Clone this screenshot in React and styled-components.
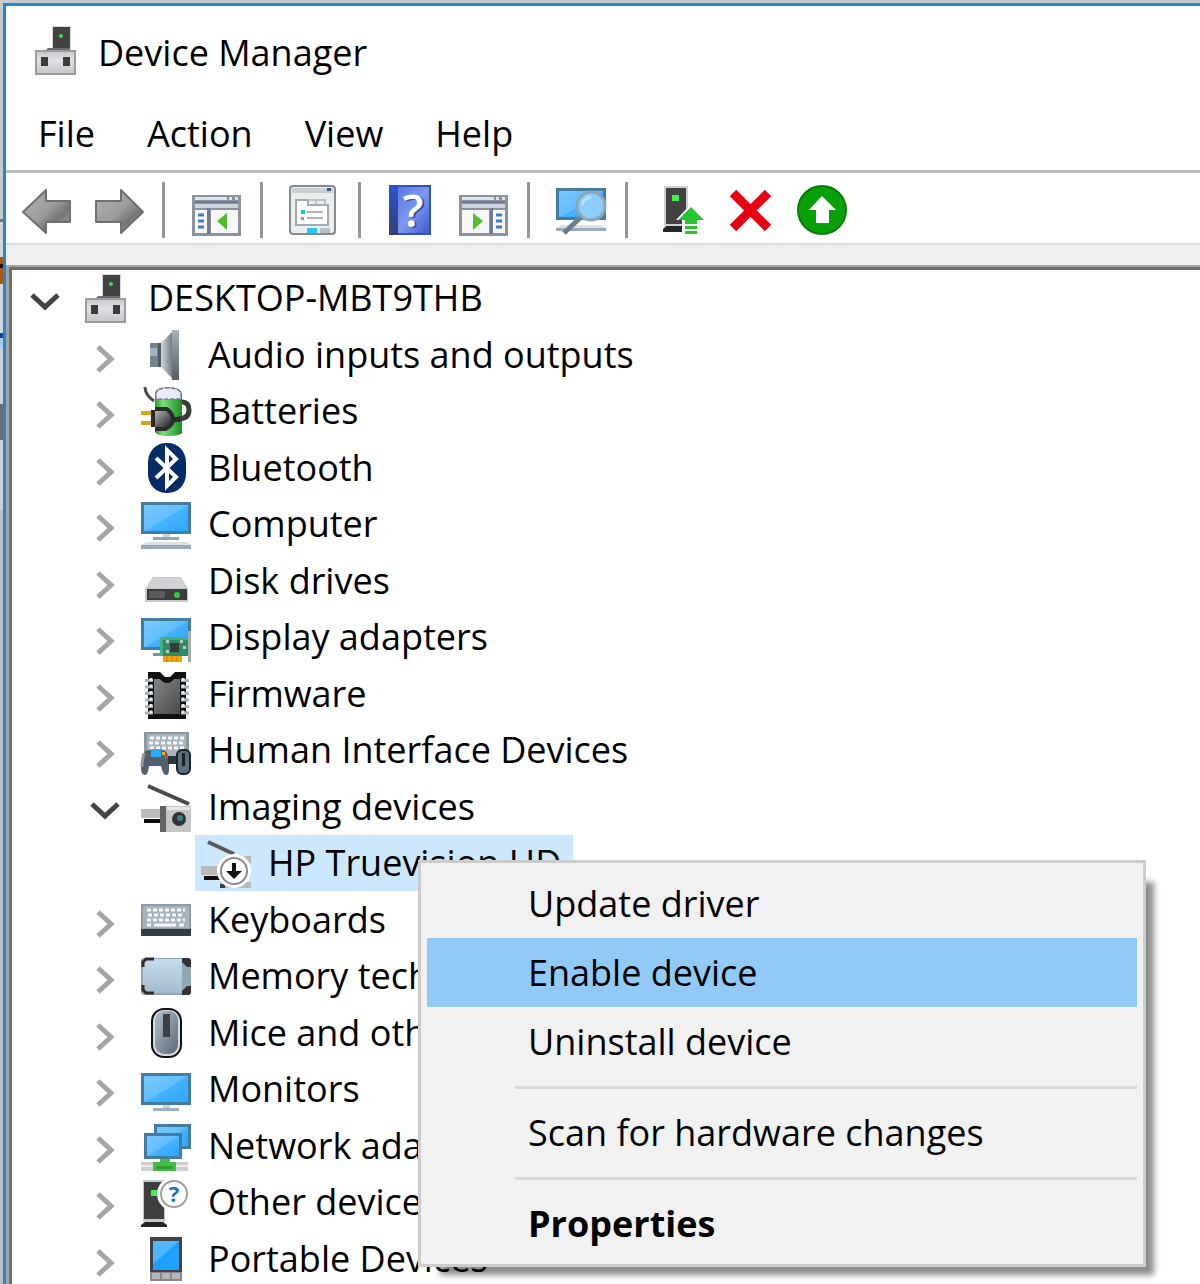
import React, { useState } from "react";
import styled, { createGlobalStyle, css } from "styled-components";

const GlobalStyle = createGlobalStyle`
  * {
    box-sizing: border-box;
  }

  body {
    margin: 0;
    color: #000;
    font-family: "Open Sans", "Noto Sans", sans-serif;
    font-size: 36px;
    line-height: 50px;
  }

  button {
    border: 0;
    padding: 0;
    margin: 0;
    background: none;
    color: inherit;
    font: inherit;
    white-space: nowrap;
  }
`;

const Svg = ({ children }) => (
  <Glyph viewBox="0 0 50 50" aria-hidden="true">
    {children}
  </Glyph>
);

const Gradients = () => (
  <Defs aria-hidden="true">
    <defs>
      <linearGradient id="screen" x1="0" y1="0" x2="1" y2="1">
        <stop offset="0" stopColor="#7cc9ff" />
        <stop offset="0.5" stopColor="#62beff" />
        <stop offset="0.52" stopColor="#45b2ff" />
        <stop offset="1" stopColor="#2ba6ff" />
      </linearGradient>
      <linearGradient id="steel" x1="0" y1="0" x2="1" y2="0">
        <stop offset="0" stopColor="#d4d7d9" />
        <stop offset="1" stopColor="#6b7680" />
      </linearGradient>
      <linearGradient id="plate" x1="0" y1="0" x2="0" y2="1">
        <stop offset="0" stopColor="#a8b1b9" />
        <stop offset="1" stopColor="#525d68" />
      </linearGradient>
      <linearGradient id="box" x1="0" y1="0" x2="0" y2="1">
        <stop offset="0" stopColor="#c6c6ca" />
        <stop offset="0.4" stopColor="#e2e2e5" />
        <stop offset="1" stopColor="#c4c4ca" />
      </linearGradient>
      <linearGradient id="arrow" x1="0" y1="0" x2="1" y2="1">
        <stop offset="0" stopColor="#b5b5b5" />
        <stop offset="0.5" stopColor="#9b9b9b" />
        <stop offset="0.7" stopColor="#767676" />
        <stop offset="1" stopColor="#a5a5a5" />
      </linearGradient>
      <linearGradient id="green" x1="0" y1="0" x2="1" y2="0">
        <stop offset="0" stopColor="#2c9a33" />
        <stop offset="0.3" stopColor="#7fdb7c" />
        <stop offset="1" stopColor="#199022" />
      </linearGradient>
      <linearGradient id="plug" x1="0" y1="0" x2="1" y2="1">
        <stop offset="0" stopColor="#b5b5b5" />
        <stop offset="1" stopColor="#222" />
      </linearGradient>
      <linearGradient id="chip" x1="0" y1="0" x2="1" y2="1">
        <stop offset="0" stopColor="#848484" />
        <stop offset="1" stopColor="#4a4a4a" />
      </linearGradient>
      <linearGradient id="memory" x1="0" y1="0" x2="0" y2="1">
        <stop offset="0" stopColor="#c4dcec" />
        <stop offset="1" stopColor="#a4bccb" />
      </linearGradient>
      <linearGradient id="mouse" x1="0" y1="0" x2="1" y2="1">
        <stop offset="0" stopColor="#b4bfca" />
        <stop offset="1" stopColor="#5b6876" />
      </linearGradient>
      <linearGradient id="book" x1="0" y1="0" x2="1" y2="1">
        <stop offset="0" stopColor="#5878e6" />
        <stop offset="0.5" stopColor="#7f98ee" />
        <stop offset="1" stopColor="#3a5fd2" />
      </linearGradient>
      <linearGradient id="spine" x1="0" y1="0" x2="0" y2="1">
        <stop offset="0" stopColor="#2a55d0" />
        <stop offset="1" stopColor="#364079" />
      </linearGradient>
    </defs>
  </Defs>
);

const Screen = ({ x, y, w, h }) => (
  <rect x={x + 1.5} y={y + 1.5} width={w - 3} height={h - 3} fill="url(#screen)" stroke="#437c9f" strokeWidth="3" />
);

const HostIcon = () => (
  <Svg>
    <path d="M21 1h19v24H21z" fill="#d3d9dc" />
    <path d="M22 2h17v24H22z" fill="#424242" />
    <path d="M17 23h22v3H14z" fill="#6c6c6c" />
    <circle cx="30" cy="11" r="2" fill="#3fdc4c" />
    <rect x="5" y="26" width="39" height="23" fill="url(#box)" stroke="#9c9c9e" strokeWidth="2" />
    <path d="M10 32h7v9h-7zM32 32h7v9h-7z" fill="#3c3c3e" />
  </Svg>
);

const SpeakerIcon = () => (
  <Svg>
    <path d="M9 13h10v24H9z" fill="#748291" />
    <path d="M9 18h7v8H9z" fill="#a6b3bf" />
    <path d="M17 13h3v24h-3z" fill="#4d5965" />
    <path d="M20 13 32 1v48L20 37z" fill="url(#steel)" />
    <path d="M31 0h7v50h-7z" fill="url(#plate)" />
  </Svg>
);

const BatteryIcon = () => (
  <Svg>
    <path d="M14 8Q14 1 27 1t14 7v34q0 8-14 8t-13-8z" fill="url(#green)" />
    <path d="M15 8Q15 2 27 2t13 6v5H15z" fill="#eceafa" stroke="#7e7b98" strokeWidth="1.5" strokeDasharray="4 2" />
    <path d="M14 42q0 8 13 8t14-8v5q-4 3-14 3t-13-4z" fill="#167320" />
    <path d="M4 1q0 8 9 14" fill="none" stroke="#4b4b4b" strokeWidth="3" />
    <path d="M36 33q12 0 12-9 0-8-7-8" fill="none" stroke="#3c3c3c" strokeWidth="5" />
    <path d="M0 25h10v4H0zM0 35h10v4H0z" fill="#d5a80d" />
    <path d="M10 24h4v-3h12q5 2 8 10h5v5h-5q-3 6-9 9H14v-4h-4z" fill="#2b2b2b" />
    <path d="M14 25h11q5 4 5 8t-5 8H14z" fill="url(#plug)" />
  </Svg>
);

const BluetoothIcon = () => (
  <Svg>
    <rect x="7" y="0" width="38" height="50" rx="18" ry="19" fill="#052c66" />
    <path d="M15 15 35 34 26 43V7l9 9L15 35" fill="none" stroke="#fff" strokeWidth="4" />
  </Svg>
);

const ComputerIcon = () => (
  <Svg>
    <Screen x={0} y={3} w={50} h={32} />
    <path d="M22 35h7v3h-7z" fill="#c7d5df" />
    <path d="M12 38h26v3H12z" fill="#8fa5b8" />
    <path d="M5 43h40l5 3H0z" fill="#dbe1e6" />
    <path d="M0 46h50v4H0z" fill="#9aabba" />
  </Svg>
);

const DiskIcon = () => (
  <Svg>
    <path d="M12 21h28l7 12v13H4V33z" fill="#c5cacf" />
    <path d="M12 22h28l5 10H6z" fill="#d1d2d5" />
    <path d="M6 33h40v11H6z" fill="#3d3d3e" />
    <path d="M8 35h16v7H8z" fill="#5b5b5b" />
    <circle cx="36" cy="39" r="3" fill="#35c93b" />
  </Svg>
);

const DisplayIcon = () => (
  <Svg>
    <Screen x={0} y={6} w={50} h={32} />
    <path d="M12 41h10v3H12z" fill="#7990a5" />
    <path d="M47 19h3v31h-3z" fill="#a8acad" />
    <path d="M19 25h28v19H19z" fill="#2e8b63" />
    <path d="M19 25h28v3H22v16h-3z" fill="#48ae7d" />
    <path d="M29 31h9v9h-9z" fill="#373b39" />
    <path d="M25 28h3v3h-3zM39 28h3v3h-3zM25 38h3v3h-3zM42 34h3v3h-3z" fill="#b9cdbf" />
    <path d="M22 44h19v6H22z" fill="#f2a30b" />
    <path d="M26 44v6M31 44v6M36 44v6" stroke="#d98200" />
  </Svg>
);

const FirmwareIcon = () => (
  <Svg>
    <path d="M7 3h12l5 5h5l5-5h11v47H7z" fill="#101010" />
    <path d="M13 10h6q3 4 7 4t7-4h6v35H13z" fill="url(#chip)" />
    <path d="M8 10v36M44 10v36" stroke="#a6b1ba" strokeWidth="8" strokeDasharray="3 3.5" />
    <path d="M10 9v36M42 9v36" stroke="#e3e8ec" strokeWidth="3" strokeDasharray="3 3.5" />
  </Svg>
);

const HidIcon = () => (
  <Svg>
    <path d="M3 7h45v28H3z" fill="#8c98a3" />
    <path d="M6 9h39v22H6z" fill="#aab4bc" />
    <path d="M9 13h34M8 18h36M9 23h34" stroke="#f5f6f7" strokeWidth="3" strokeDasharray="4 2" />
    <path d="M7 25h15q6 1 6 14v6q0 5-3 5t-5-9H8q-1 9-4 9-4 0-4-7 0-17 7-18z" fill="#53606b" />
    <path d="M3 28q-2 8-2 14" fill="none" stroke="#8d9aa4" strokeWidth="3" />
    <path d="M10 24h10v8H10z" fill="#2eaaff" />
    <path d="M21 27h3v3h-3z" fill="#f3b51b" />
    <path d="M24 30h3v3h-3z" fill="#e24a3b" />
    <path d="M27 31h8v8h-8z" fill="#2d363e" />
    <rect x="36" y="25" width="13" height="24" rx="5" fill="#5e6d7e" stroke="#1c232a" strokeWidth="2" />
    <path d="M41 28h3v13h-3z" fill="#1b222a" />
  </Svg>
);

const CameraIcon = () => (
  <Svg>
    <path d="m7 4 41 18" stroke="#4a4a4a" strokeWidth="4" />
    <path d="M0 27h19v9H0z" fill="#bdbdbd" />
    <path d="M3 37h16v4H3z" fill="#0e0e0e" />
    <path d="M19 24h31v26H19z" fill="#c5c5c5" />
    <path d="M19 24h6v26h-6z" fill="#636363" />
    <path d="M26 25h23v3H26z" fill="#e7e7e7" />
    <circle cx="38" cy="37" r="7" fill="#303438" />
    <circle cx="39" cy="36" r="3" fill="#407f86" />
  </Svg>
);

const DisabledCameraIcon = () => (
  <Svg>
    <path d="m7 4 26 12" stroke="#5a5a5a" strokeWidth="4" />
    <path d="M0 28h17v9H0z" fill="#b9b9b9" />
    <path d="M3 38h16v4H3z" fill="#0e0e0e" />
    <path d="M19 44h31v6H19zM42 18h8v8z" fill="#b4b9bd" />
    <path d="M19 46h5v4h-5z" fill="#3b3b3b" />
    <circle cx="33" cy="33" r="17" fill="#fff" />
    <circle cx="33" cy="33" r="13" fill="#fff" stroke="#8b8b8b" strokeWidth="2" />
    <path d="M31 25h4v8h6l-8 8-8-8h6z" fill="#111" />
  </Svg>
);

const KeyboardIcon = () => (
  <Svg>
    <path d="M0 9h50v32H0z" fill="#8e9aa5" />
    <path d="M2 11h46v22H2z" fill="#aab4bd" />
    <path d="M6 15h38M7 20h36M6 25h38" stroke="#f5f6f7" strokeWidth="3" strokeDasharray="4 2" />
    <path d="M6 30h4M13 30h22M38 30h5" stroke="#f5f6f7" strokeWidth="3" />
    <path d="M0 34h50v7H0z" fill="#343c41" />
  </Svg>
);

const MemoryIcon = () => (
  <Svg>
    <rect x="0" y="7" width="50" height="37" rx="3" fill="#8ea6b6" />
    <path d="M2 8h39v34H2z" fill="url(#memory)" />
    <path d="M2 16v-5l3-3h8M2 34v5l3 3h8" fill="none" stroke="#2d2d2d" strokeWidth="3" />
    <path d="M41 7h7l2 2v7h-4l-5-5zM41 44h7l2-2v-7h-4l-5 5z" fill="#333" />
  </Svg>
);

const MouseIcon = () => (
  <Svg>
    <rect x="11" y="1" width="29" height="48" rx="12" fill="#d5dbe0" stroke="#111" strokeWidth="2" />
    <rect x="14" y="3" width="23" height="43" rx="9" fill="url(#mouse)" />
    <path d="M22 6h7v23h-7z" fill="#3c3f43" />
  </Svg>
);

const MonitorIcon = () => (
  <Svg>
    <Screen x={0} y={9} w={50} h={32} />
    <path d="M22 41h7v3h-7z" fill="#c7d5df" />
    <path d="M12 44h26v3H12z" fill="#9fb0c0" />
  </Svg>
);

const NetworkIcon = () => (
  <Svg>
    <Screen x={13} y={3} w={37} h={25} />
    <Screen x={3} y={12} w={38} h={26} />
    <path d="M0 41h47v9H0z" fill="#cfcfcf" />
    <path d="M0 44h47v2H0z" fill="#ececec" />
    <path d="M19 38h10v3h6v9H12v-9h7z" fill="#45bb49" />
    <path d="M15 45h17v3H15z" fill="#329e38" />
  </Svg>
);

const UnknownIcon = () => (
  <Svg>
    <path d="M2 3h22v42H2z" fill="#c3cacf" />
    <path d="M3 5h20v37H3z" fill="#3f3f3f" />
    <path d="M4 45h18l4 3v2H0v-2z" fill="#242424" />
    <path d="M10 13h7v6h-7z" fill="#3df04c" />
    <circle cx="33" cy="17" r="17" fill="#fff" />
    <circle cx="33" cy="17" r="13" fill="#fff" stroke="#a0a0a0" strokeWidth="2" />
    <text x="33" y="25" textAnchor="middle" fontSize="22" fontWeight="700" fill="#1b74bb">
      ?
    </text>
  </Svg>
);

const PortableIcon = () => (
  <Svg>
    <path d="M9 3h32v44H9z" fill="#434343" />
    <path d="M12 7h26v29H12z" fill="#1ea0ff" />
    <path d="M12 7h26L12 30z" fill="#4fb6ff" />
    <path d="M9 38h32v9H9z" fill="#85898c" />
    <path d="M11 39h8v6h-8zM21 39h8v6h-8zM31 39h8v6h-8z" fill="#b5b8ba" />
  </Svg>
);

const BackIcon = () => (
  <Svg>
    <path d="M1 27 24 5v11h24v21H24v11z" fill="url(#arrow)" stroke="#707070" strokeWidth="2" strokeLinejoin="round" />
  </Svg>
);

const ForwardIcon = () => (
  <Svg>
    <path d="M50 27 28 5v11H3v21h25v11z" fill="url(#arrow)" stroke="#707070" strokeWidth="2" strokeLinejoin="round" />
  </Svg>
);

const PaneIcon = ({ flip }) => (
  <Svg>
    <path d="M1 10h49v41H1z" fill="#8d939c" />
    <path d="M4 12h32v3H4zM38 12h3v3h-3zM44 12h3v3h-3z" fill="#dfe3e8" />
    <path d="M4 16h43v2H4z" fill="#6d7a99" />
    <path d="M4 19h43v4H4z" fill="#cfd4da" />
    <g transform={flip ? "matrix(-1 0 0 1 51 0)" : undefined}>
      <path d="M4 25h12v23H4zM20 25h27v23H20z" fill="#f7f7f7" />
      <path d="M16 23h3v26h-3z" fill="#6d7a99" />
      <path d="M7 30h6M7 36h6M7 42h6" stroke="#3f7dc2" strokeWidth="3" />
      <path d="M26 36 36 28v17z" fill="#53bd30" />
    </g>
  </Svg>
);

const PropertiesIcon = () => (
  <Svg>
    <rect x="1" y="1" width="45" height="48" rx="3" fill="#eceeee" stroke="#858a8d" strokeWidth="2" />
    <path d="M3 3h41v5H3z" fill="#c9ced2" />
    <path d="M38 3h4v3h-4z" fill="#3a5678" />
    <path d="M7 15h12v5h20v20H7z" fill="#fff" stroke="#a3a9b5" strokeWidth="2" />
    <path d="M19 15h8v5M27 15h9v5" fill="none" stroke="#b9bec8" strokeWidth="2" />
    <path d="M18 27h16M18 33h16" stroke="#b2b2b2" strokeWidth="2" />
    <path d="M12 25h4v4h-4z" fill="#19c4f2" />
    <path d="M12 32h3v3h-3z" fill="#999" />
    <path d="M18 43h10v5H18z" fill="#24c8f5" />
    <path d="M31 43h10v5H31z" fill="#bdbdbd" />
  </Svg>
);

const HelpIcon = () => (
  <Svg>
    <path d="M2 0h42v50H2z" fill="#3553b5" />
    <path d="M2 0h9v50H2z" fill="url(#spine)" />
    <path d="M11 2h31v46H11z" fill="url(#book)" />
    <text x="28" y="43" textAnchor="middle" fontSize="46" fontWeight="600" fill="#3a4c94">
      ?
    </text>
    <text x="26" y="42" textAnchor="middle" fontSize="46" fontWeight="600" fill="#fff">
      ?
    </text>
  </Svg>
);

const ScanIcon = () => (
  <Svg>
    <Screen x={0} y={3} w={50} h={32} />
    <path d="M5 40h40l5 3H0z" fill="#dbe1e6" />
    <path d="M0 43h50v3H0z" fill="#9aabba" />
    <path d="M24 33 8 48" stroke="#6d7f8d" strokeWidth="5" />
    <circle cx="35" cy="21" r="14" fill="#8bcdfb" stroke="#8fa5b4" strokeWidth="3" />
    <path d="M26 20q2-7 9-8" fill="none" stroke="#b5e0ff" strokeWidth="3" />
  </Svg>
);

const UpdateIcon = () => (
  <Svg>
    <path d="M10 1h24v40H10z" fill="#ccd1d6" />
    <path d="M12 3h20v36H12z" fill="#424242" />
    <path d="M12 41h17v3h2v3H9v-3z" fill="#272727" />
    <path d="M18 10h7v6h-7z" fill="#39f445" />
    <path d="M36 20 22 35h6v15h17V35h6z" fill="#fff" />
    <path d="M37 22 24 35h7v4h12v-4h7zM31 41h12v3H31zM31 46h12v3H31z" fill="#25c52f" />
  </Svg>
);

const DeleteIcon = () => (
  <Svg>
    <path d="m8 8 35 35M43 8 8 43" stroke="#e60012" strokeWidth="9" />
  </Svg>
);

const EnableIcon = () => (
  <Svg>
    <circle cx="26" cy="25" r="24" fill="#08a008" stroke="#0b7a0b" strokeWidth="2" />
    <path d="M26 11 40 25h-7v13H20V25h-7z" fill="#fff" />
  </Svg>
);

const Chevron = ({ open }) => (
  <Svg>
    {open ? (
      <path d="m12 22 13 12 13-12" fill="none" stroke="#444" strokeWidth="5" />
    ) : (
      <path d="m18 17 13 12-13 12" fill="none" stroke="#a6a6a6" strokeWidth="5" />
    )}
  </Svg>
);

const menus = ["File", "Action", "View", "Help"];

const tools = [
  [
    ["Back", BackIcon],
    ["Forward", ForwardIcon],
  ],
  [["Show/Hide Console Tree", PaneIcon]],
  [["Properties", PropertiesIcon]],
  [
    ["Help", HelpIcon],
    ["Show/Hide Action Pane", () => <PaneIcon flip />],
  ],
  [["Scan for hardware changes", ScanIcon]],
  [
    ["Update driver", UpdateIcon],
    ["Uninstall device", DeleteIcon],
    ["Enable device", EnableIcon],
  ],
];

const devices = [
  { name: "DESKTOP-MBT9THB", icon: HostIcon, level: 0, open: true },
  { name: "Audio inputs and outputs", icon: SpeakerIcon, level: 1 },
  { name: "Batteries", icon: BatteryIcon, level: 1 },
  { name: "Bluetooth", icon: BluetoothIcon, level: 1 },
  { name: "Computer", icon: ComputerIcon, level: 1 },
  { name: "Disk drives", icon: DiskIcon, level: 1 },
  { name: "Display adapters", icon: DisplayIcon, level: 1 },
  { name: "Firmware", icon: FirmwareIcon, level: 1 },
  { name: "Human Interface Devices", icon: HidIcon, level: 1 },
  { name: "Imaging devices", icon: CameraIcon, level: 1, open: true },
  { name: "HP Truevision HD", icon: DisabledCameraIcon, level: 2, leaf: true },
  { name: "Keyboards", icon: KeyboardIcon, level: 1 },
  { name: "Memory technology devices", icon: MemoryIcon, level: 1 },
  { name: "Mice and other pointing devices", icon: MouseIcon, level: 1 },
  { name: "Monitors", icon: MonitorIcon, level: 1 },
  { name: "Network adapters", icon: NetworkIcon, level: 1 },
  { name: "Other devices", icon: UnknownIcon, level: 1 },
  { name: "Portable Devices", icon: PortableIcon, level: 1 },
];

const actions = [
  ["Update driver", "Enable device", "Uninstall device"],
  ["Scan for hardware changes"],
  ["Properties"],
];

const ContextMenu = () => {
  const [active, setActive] = useState("Enable device");
  return (
    <Popup role="menu">
      {actions.map((group) => (
        <Group key={group[0]}>
          {group.map((label) => (
            <MenuItem
              key={label}
              role="menuitem"
              $active={label === active}
              $bold={label === "Properties"}
              onMouseEnter={() => setActive(label)}
            >
              {label}
            </MenuItem>
          ))}
        </Group>
      ))}
    </Popup>
  );
};

const DeviceRow = ({ device }) => {
  const Icon = device.icon;
  return (
    <Row role="treeitem" aria-expanded={device.open} $level={device.level}>
      <ChevronCell>
        {!device.leaf && (
          <ToolButton aria-label={`Toggle ${device.name}`}>
            <Chevron open={device.open} />
          </ToolButton>
        )}
      </ChevronCell>
      <Label $selected={device.leaf}>
        <Icon />
        {device.name}
      </Label>
      {device.leaf && <ContextMenu />}
    </Row>
  );
};

const App = () => {
  return (
    <Desktop>
      <GlobalStyle />
      <Gradients />
      <Window>
        <TitleBar>
          <HostIcon />
          <Title>Device Manager</Title>
        </TitleBar>
        <MenuBar>
          {menus.map((menu) => (
            <MenuButton key={menu}>{menu}</MenuButton>
          ))}
        </MenuBar>
        <Toolbar>
          {tools.map((group) => (
            <ToolGroup key={group[0][0]}>
              {group.map(([label, Icon]) => (
                <ToolButton key={label} aria-label={label}>
                  <Icon />
                </ToolButton>
              ))}
            </ToolGroup>
          ))}
        </Toolbar>
        <Tree role="tree">
          {devices.map((device) => (
            <DeviceRow key={device.name} device={device} />
          ))}
        </Tree>
      </Window>
    </Desktop>
  );
};

const Glyph = styled.svg`
  display: block;
  flex: none;
  width: 50px;
  height: 50px;
  overflow: visible;
`;

const Defs = styled.svg`
  position: absolute;
  width: 0;
  height: 0;
`;

/* a sliver of the windows behind shows along the left edge */
const Desktop = styled.div`
  display: flex;
  height: 100vh;
  padding: 3px 0 0 3px;
  overflow: hidden;
  background: linear-gradient(
    #c9c9c9 219px,
    #777 219px 222px,
    #d2d6d8 222px 257px,
    #a85808 257px 264px,
    #1a1008 264px 268px,
    #a85808 268px 284px,
    #d2d6d8 284px 333px,
    #1d3f9b 333px 338px,
    #a9cdea 338px 348px,
    #cdd1d4 348px 404px,
    #6c6f72 404px 440px,
    #cdd1d4 440px 510px,
    #bcbcbc 510px
  );
`;

const Window = styled.main`
  flex: 1;
  min-width: 0;
  display: flex;
  flex-direction: column;
  border: solid #2186d8;
  border-width: 3px 0 0 3px;
  background: #efefef;
`;

const TitleBar = styled.header`
  display: flex;
  gap: 17px;
  padding: 19px 25px 15px;
  background: #fff;
`;

const Title = styled.h1`
  margin: 0;
  padding-top: 3px;
  font-size: inherit;
  font-weight: 400;
`;

const MenuBar = styled.nav`
  display: flex;
  gap: 2px;
  padding: 16px 7px 11px;
  border-bottom: 3px solid #bbbdbd;
  background: #fff;
`;

const MenuButton = styled.button`
  padding: 0 25px;
`;

const Toolbar = styled.div`
  display: flex;
  padding: 9px 16px 5px;
  border-bottom: 2px solid #dedede;
  background: #fff;
`;

const ToolGroup = styled.div`
  display: flex;
  align-items: center;
  gap: 21px;
  height: 56px;

  & + & {
    margin-left: 19px;
    padding-left: 26px;
    border-left: 3px solid #969696;
  }
`;

const ToolButton = styled.button`
  display: flex;
`;

const Tree = styled.ul`
  flex: 1;
  min-height: 0;
  margin: 20px 0 0;
  padding: 3px 0 0 3px;
  overflow: hidden auto;
  scrollbar-width: none;
  list-style: none;
  border: solid #a3a3a3;
  border-width: 2px 0 0 3px;
  background: #fff;
  box-shadow: inset 3px 3px #6e6e6e;
`;

const Row = styled.li`
  position: relative;
  display: flex;
  height: 57px;
  padding-left: ${({ $level }) => 3 + $level * 60}px;

  &:nth-child(odd) {
    height: 56px;
  }
`;

const ChevronCell = styled.span`
  display: flex;
  justify-content: center;
  align-items: center;
  width: 60px;
`;

const Label = styled.button`
  display: flex;
  align-items: center;
  gap: 17px;
  padding: 0 12px 0 6px;
  background: ${({ $selected }) => ($selected ? "#cce8ff" : "none")};
`;

const Popup = styled.div`
  position: absolute;
  z-index: 1;
  top: 25px;
  left: 406px;
  width: 728px;
  padding: 6px;
  border: 3px solid #ccc;
  background: #f1f1f1;
  box-shadow: 15px 15px 6px -7px rgba(0, 0, 0, 0.45);
`;

const Group = styled.div`
  display: flex;
  flex-direction: column;

  & + &::before {
    content: "";
    margin: 10px 0 9px 88px;
    border-top: 3px solid #d9d9d9;
  }
`;

const MenuItem = styled.button`
  height: 69px;
  padding-left: 101px;
  text-align: left;

  ${({ $active }) =>
    $active &&
    css`
      background: #91c9f7;
    `}

  ${({ $bold }) =>
    $bold &&
    css`
      font-weight: 700;
    `}
`;

export default App;
